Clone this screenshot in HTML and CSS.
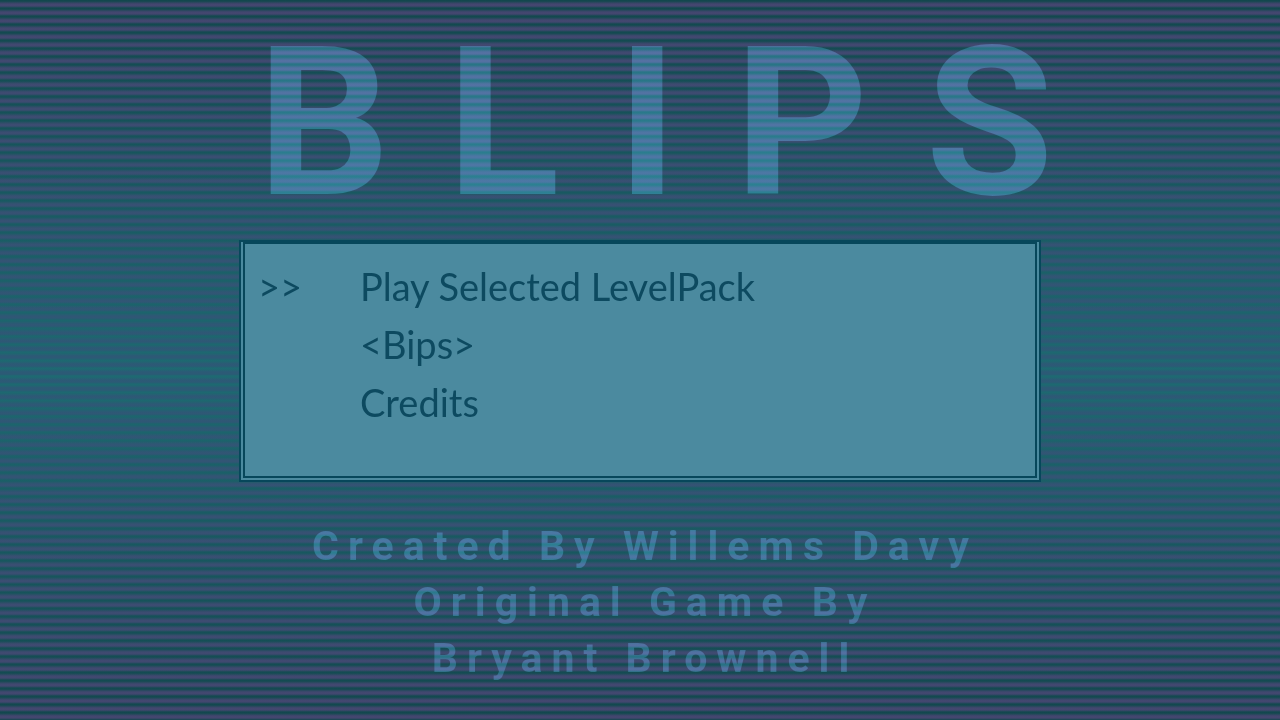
FILE: index.html
```html
<!DOCTYPE html>
<html lang="en">
<head>
<meta charset="utf-8">
<meta name="viewport" content="width=device-width, initial-scale=1">
<title>BLIPS</title>
<link rel="stylesheet" href="styles.css">
</head>
<body class="screen">
<h1 class="title">BLIPS</h1>
<nav class="menu" aria-label="Main menu">
<ul class="menu-list">
<li class="menu-row"><span class="cursor" aria-hidden="true">&gt;&gt;</span><button class="menu-item" type="button">Play Selected LevelPack</button></li>
<li class="menu-row"><button class="menu-item" type="button">&lt;Bips&gt;</button></li>
<li class="menu-row"><button class="menu-item" type="button">Credits</button></li>
</ul>
</nav>
<footer class="credits">
<p class="credit">Created By Willems Davy</p>
<p class="credit">Original Game By</p>
<p class="credit">Bryant Brownell</p>
</footer>
</body>
</html>
```

FILE: styles.css
```css
* {
  box-sizing: border-box;
}

.screen {
  position: relative;
  isolation: isolate;
  display: flex;
  flex-direction: column;
  align-items: center;
  min-height: 100vh;
  margin: 0;
  font-family: Roboto, "Liberation Sans", sans-serif;
}

.screen::before,
.screen::after {
  content: "";
  position: absolute;
  inset: 0;
  z-index: -1;
}

.screen::before {
  background: linear-gradient(#12474d, #1e6a72 52%, #12474d);
}

/* Scan lines, eight pixels apart */
.screen::after {
  background: linear-gradient(#44466f, #2c5a76 52%, #44466f);
  mask-image: repeating-linear-gradient(transparent 0 1px, #000 4px 6px, transparent 8px);
}

.title {
  margin: 0;
  padding: 23px 0 17px 88px;
  font-size: 208px;
  font-weight: 700;
  line-height: 200px;
  letter-spacing: 57px;
  color: #142832;
  mix-blend-mode: plus-lighter;
}

.menu {
  width: calc(62.5% + 2px);
  padding: 0 2px 2px;
  border: 2px solid #07475b;
  background: #4b8a9f;
}

.menu-list {
  margin: 0;
  padding: 13px 11px 45px;
  border: 2px solid #07475b;
  list-style: none;
}

.menu-row {
  display: grid;
  grid-template-columns: 104px 1fr;
  align-items: center;
  font-family: Lato, "Open Sans", sans-serif;
  font-size: 38px;
  line-height: 58px;
  color: #0d4a60;
}

.cursor {
  padding-left: 2px;
}

.menu-item {
  grid-column: 2;
  justify-self: start;
  margin: 0;
  padding: 0;
  border: 0;
  background: none;
  font: inherit;
  color: inherit;
  cursor: pointer;
}

.credits {
  padding: 36px 0 32px 10px;
  mix-blend-mode: plus-lighter;
  text-align: center;
}

.credit {
  margin: 0;
  font-size: 41px;
  font-weight: 700;
  line-height: 56px;
  letter-spacing: 9px;
  color: #142631;
}
```
